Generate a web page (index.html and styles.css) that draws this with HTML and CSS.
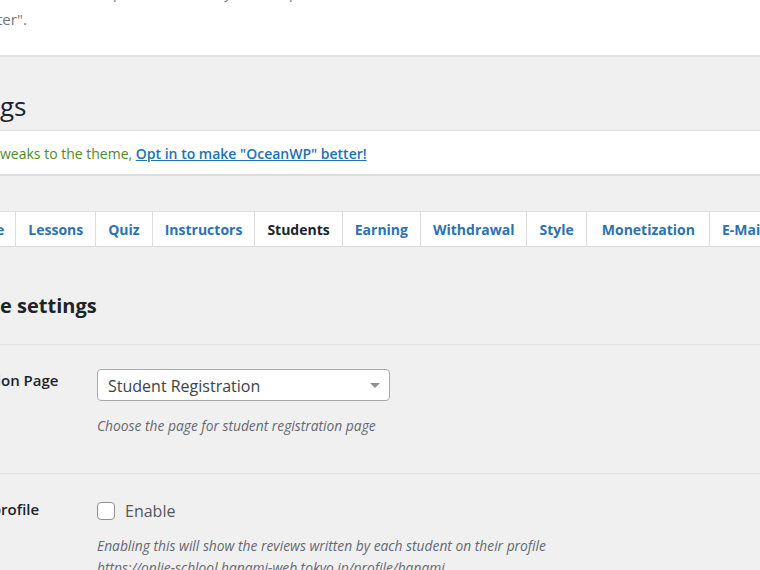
FILE: index.html
```html
<!DOCTYPE html>
<html lang="en">
<head>
<meta charset="utf-8">
<title>Tutor LMS Settings</title>
<link rel="stylesheet" href="styles.css">
</head>
<body>
  <div class="top-notice">
    <p class="line1"><span class="clip">We</span> want to improve, so we ask you to help with some non-sensitive data about how the theme is used.</p>
    <p class="line2"><span class="clip">make "OceanWP" bet</span>ter".</p>
  </div>

  <h1 class="page-title"><span class="clip">Tutor LMS Settin</span>gs</h1>

  <div class="notice">
    <p><span class="clip">If you want to see more features and t</span>weaks to the theme, <a href="#">Opt in to make "OceanWP" better!</a></p>
  </div>

  <nav class="tabs">
    <a class="tab tab-cut" href="#"><span class="clip">Cours</span>e</a>
    <a class="tab" href="#">Lessons</a>
    <a class="tab" href="#">Quiz</a>
    <a class="tab" href="#">Instructors</a>
    <a class="tab active" href="#">Students</a>
    <a class="tab" href="#">Earning</a>
    <a class="tab" href="#">Withdrawal</a>
    <a class="tab" href="#">Style</a>
    <a class="tab tab-wide" href="#">Monetization</a>
    <a class="tab" href="#">E-Mails</a>
  </nav>

  <h2 class="section-title"><span class="clip">Student Profil</span>e settings</h2>

  <div class="row">
    <div class="label"><span class="clip">Student Registrati</span>on Page</div>
    <div class="field">
      <div class="select">
        <span>Student Registration</span>
        <span class="arrow"></span>
      </div>
      <p class="desc">Choose the page for student registration page</p>
    </div>
  </div>

  <div class="row">
    <div class="label"><span class="clip">Show reviews on p</span>rofile</div>
    <div class="field">
      <label class="check"><span class="box"></span>Enable</label>
      <p class="desc">Enabling this will show the reviews written by each student on their profile<br>https://onlie-schlool.hanami-web.tokyo.jp/profile/hanami</p>
    </div>
  </div>
</body>
</html>
```

FILE: styles.css
```css
html, body {
  margin: 0;
  padding: 0;
}
body {
  background: #f0f0f1;
  font-family: "Open Sans", "Noto Sans", sans-serif;
  color: #1d2327;
  overflow: hidden;
  width: 760px;
  height: 570px;
}
.clip {
  display: inline-flex;
  width: 0;
  justify-content: flex-end;
  white-space: nowrap;
}
.top-notice {
  background: #fff;
  height: 55px;
  border-bottom: 2px solid #e2e2e4;
  overflow: hidden;
  color: #72777c;
  font-size: 14px;
}
.top-notice p {
  margin: 0;
  white-space: nowrap;
  line-height: 24px;
}
.line1 {
  margin-top: -19px !important;
  padding-left: 40px;
}
.line2 {
  margin-top: 2px !important;
  margin-left: -3px !important;
  font-size: 15px;
}
.page-title {
  margin: 34px 0 0 0;
  font-size: 26px;
  font-weight: 400;
  line-height: 31px;
  height: 39px;
  white-space: nowrap;
}
.notice {
  background: #fff;
  border-top: 1px solid #dcdcde;
  border-bottom: 2px solid #dcdcde;
  height: 43px;
  display: flex;
  align-items: center;
}
.notice p {
  margin: 0;
  font-size: 14px;
  color: #4f8a2c;
  white-space: nowrap;
  padding-top: 2px;
}
.notice a {
  color: #2271b1;
  font-weight: 600;
  text-decoration: underline;
}
.tabs {
  margin-top: 35px;
  display: flex;
  background: #fff;
  border-top: 1px solid #dcdcde;
  border-bottom: 1px solid #dcdcde;
  height: 34px;
  white-space: nowrap;
}
.tab {
  display: flex;
  align-items: center;
  padding: 0 12px;
  border-right: 1px solid #dcdcde;
  font-size: 14px;
  font-weight: 700;
  color: #2c72b1;
  text-decoration: none;
}
.tab-cut {
  padding: 0 11px 0 0;
  margin-left: -4px;
}
.tab-wide {
  padding: 0 14px 0 15px;
}
.tab.active {
  color: #1d2327;
}
.section-title {
  margin: 46px 0 0 0;
  font-size: 20px;
  font-weight: 700;
  line-height: 26px;
  height: 51px;
  border-bottom: 1px solid #e4e4e4;
  white-space: nowrap;
}
.row {
  display: grid;
  grid-template-columns: 97px 1fr;
  border-bottom: 1px solid #e4e4e4;
  padding: 24px 0 36px 0;
}
.label {
  font-size: 15px;
  font-weight: 600;
  line-height: 22px;
  padding-left: 1px;
  white-space: nowrap;
}
.select {
  width: 272px;
  height: 30px;
  background: #fff;
  border: 1px solid #a7aaad;
  border-radius: 4px;
  display: flex;
  align-items: center;
  justify-content: space-between;
  padding: 0 9px 0 10px;
  font-size: 16px;
  color: #3c434a;
}
.select span:first-child {
  padding-top: 1px;
}
.arrow {
  width: 0;
  height: 0;
  border-left: 5px solid transparent;
  border-right: 5px solid transparent;
  border-top: 5px solid #8c8f94;
}
.desc {
  margin: 14px 0 0 0;
  font-size: 13.8px;
  font-style: italic;
  color: #646970;
  line-height: 22px;
  white-space: nowrap;
}
.check {
  display: flex;
  align-items: center;
  font-size: 16px;
  color: #50575e;
  gap: 10px;
  height: 22px;
  margin-top: 2px;
}
.box {
  width: 16px;
  height: 16px;
  border: 1px solid #8c8f94;
  border-radius: 4px;
  background: #fff;
}
.row:last-child .desc {
  margin-top: 13px;
}
```
